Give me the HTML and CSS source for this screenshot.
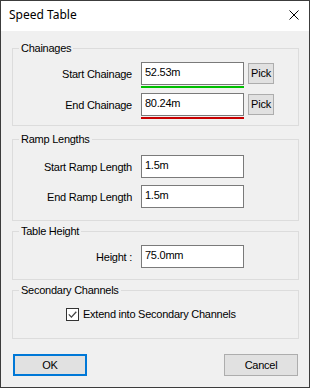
FILE: index.html
```html
<!DOCTYPE html>
<html lang="en">

<head>
  <meta charset="UTF-8">
  <meta name="viewport" content="width=device-width, initial-scale=1.0">
  <title>Speed Table</title>
  <link rel="stylesheet" href="styles.css">
</head>

<body>

  <div class="dialog">
    <div class="title-bar">
      <span class="title">Speed Table</span>
      <button class="close-button" aria-label="Close">
        <svg width="10" height="10" viewBox="0 0 10 10" xmlns="http://www.w3.org/2000/svg">
          <path d="M0.5 0.5l9 9m0-9l-9 9" stroke="#000" stroke-width="1" fill="none" />
        </svg>
      </button>
    </div>

    <fieldset class="group group-chainages">
      <legend>Chainages</legend>
      <div class="rows">
        <div class="field-row">
          <label for="start-chainage">Start Chainage</label>
          <div class="field">
            <input id="start-chainage" type="text" value="52.53m">
            <div class="underline underline-start"></div>
          </div>
          <button class="btn btn-pick">Pick</button>
        </div>
        <div class="field-row">
          <label for="end-chainage">End Chainage</label>
          <div class="field">
            <input id="end-chainage" type="text" value="80.24m">
            <div class="underline underline-end"></div>
          </div>
          <button class="btn btn-pick">Pick</button>
        </div>
      </div>
    </fieldset>

    <fieldset class="group group-ramps">
      <legend>Ramp Lengths</legend>
      <div class="rows">
        <div class="field-row">
          <label for="start-ramp">Start Ramp Length</label>
          <div class="field">
            <input id="start-ramp" type="text" value="1.5m">
          </div>
        </div>
        <div class="field-row">
          <label for="end-ramp">End Ramp Length</label>
          <div class="field">
            <input id="end-ramp" type="text" value="1.5m">
          </div>
        </div>
      </div>
    </fieldset>

    <fieldset class="group group-height">
      <legend>Table Height</legend>
      <div class="field-row">
        <label for="table-height">Height :</label>
        <div class="field">
          <input id="table-height" type="text" value="75.0mm">
        </div>
      </div>
    </fieldset>

    <fieldset class="group group-channels">
      <legend>Secondary Channels</legend>
      <label class="check-row">
        <span class="checkbox">
          <svg width="13" height="13" viewBox="0 0 13 13" xmlns="http://www.w3.org/2000/svg">
            <rect x="0.5" y="0.5" width="12" height="12" fill="#fff" stroke="#333" />
            <path d="M2.8 6.4l2.6 2.7 4.9-5.4" stroke="#444" stroke-width="1.3" fill="none" />
          </svg>
        </span>
        Extend into Secondary Channels
      </label>
    </fieldset>

    <div class="dialog-buttons">
      <button class="btn btn-default">OK</button>
      <button class="btn">Cancel</button>
    </div>
  </div>

</body>

</html>
```

FILE: styles.css
```css
* {
  box-sizing: border-box;
  margin: 0;
  padding: 0;
}

body {
  font-family: 'Liberation Sans', Arial, sans-serif;
  font-size: 11px;
  line-height: 13px;
  letter-spacing: -0.25px;
  color: #000;
  background-color: #fff;
}

.dialog {
  width: 310px;
  height: 388px;
  border: 1px solid #3c3c3c;
  background-color: #f0f0f0;
  display: flex;
  flex-direction: column;
}

.title-bar {
  height: 30px;
  flex: none;
  background-color: #fff;
  display: flex;
  justify-content: space-between;
  align-items: flex-start;
}

.title {
  font-family: 'Segoe UI', 'Noto Sans', sans-serif;
  font-size: 12px;
  line-height: 16px;
  letter-spacing: 0;
  padding: 6px 0 0 8px;
}

.close-button {
  display: flex;
  width: 10px;
  height: 10px;
  margin: 9px 10px 0 0;
  background: transparent;
  border: none;
}

/* Group boxes */
.group {
  border: 1px solid #dcdcdc;
  margin: 0 10px 0 11px;
  padding: 0 0 0 6px;
  min-width: 0;
}

.group legend {
  padding: 0 2px;
  line-height: 13px;
}

.group-chainages {
  margin-top: 11px;
  padding-top: 7px;
  padding-bottom: 6px;
}

.group-ramps {
  margin-top: 7px;
  padding-top: 9px;
  padding-bottom: 12px;
}

.group-height {
  margin-top: 4px;
  padding-top: 7px;
  padding-bottom: 11px;
}

.group-channels {
  margin-top: 4px;
  padding-top: 11px;
  padding-bottom: 17px;
}

.rows {
  display: flex;
  flex-direction: column;
  gap: 7px;
}

.group-chainages .rows {
  gap: 5px;
}

.field-row {
  display: flex;
  align-items: flex-start;
}

.field-row label {
  width: 113px;
  margin-right: 9px;
  padding-top: 6px;
  text-align: right;
}

.field input {
  display: block;
  width: 103px;
  height: 23px;
  padding: 2px 3px 6px;
  border: 1px solid #7a7a7a;
  background-color: #fff;
  font: inherit;
  letter-spacing: inherit;
  color: #000;
  outline: none;
}

.underline {
  width: 103px;
  height: 2px;
  margin-top: 1px;
}

.underline-start {
  background-color: #00c000;
}

.underline-end {
  background-color: #c80000;
}

/* Buttons */
.btn {
  font: inherit;
  letter-spacing: inherit;
  color: #000;
  background-color: #e1e1e1;
  border: 1px solid #adadad;
  cursor: pointer;
}

.btn-pick {
  width: 26px;
  height: 21px;
  margin: 1px 0 0 4px;
  padding: 0;
}

.btn-default {
  border: 2px solid #0078d7;
}

.check-row {
  display: flex;
  align-items: flex-start;
  gap: 4px;
  padding-left: 47px;
}

.checkbox {
  display: flex;
  width: 13px;
  height: 13px;
}

.dialog-buttons {
  display: flex;
  justify-content: space-between;
  margin: 15px 11px 0 12px;
}

.dialog-buttons .btn {
  width: 74px;
  height: 22px;
}
```
